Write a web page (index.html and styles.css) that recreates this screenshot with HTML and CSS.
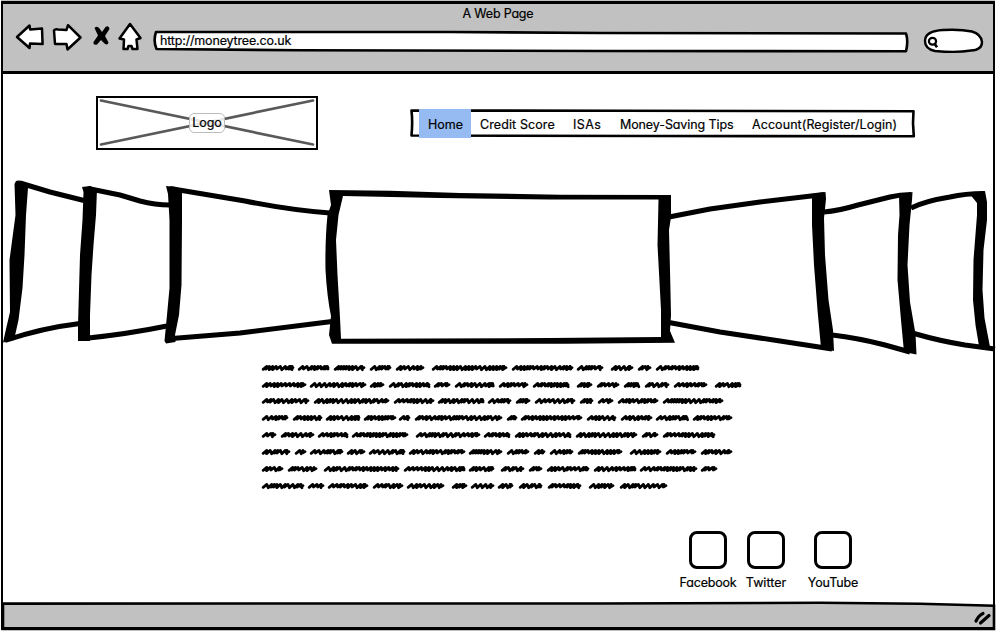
FILE: index.html
```html
<!DOCTYPE html>
<html lang="en">
<head>
<meta charset="utf-8">
<title>A Web Page</title>
<link rel="stylesheet" href="styles.css">
</head>
<body>
<div class="window">
  <header class="chrome">
    <div class="title">A Web Page</div>
    <div class="toolbar">
      <svg class="nav-icons" width="130" height="34" viewBox="13 20 130 34">
        <g fill="#fff" stroke="#000" stroke-width="2.500" stroke-linejoin="round">
          <path d="M17 37 L29.500 25.500 L30.200 29.500 L42 28.500 L42.600 44 L30 43.500 L29.500 48 Z"/>
          <path d="M54 30.500 Q55 29 58 29.500 L66.500 30 L68 25.200 L80.500 37.500 L67.500 49.500 L66.500 44 L55 44 Z"/>
          <path d="M130 24 L140.500 38 L136.500 39.500 L137.500 49 L132.500 49 L131.500 46 L128.500 46 L127.500 49 L123.500 49 L124 39.500 L119.500 38.500 Z"/>
        </g>
        <path d="M94.500 28 Q97 25.500 99.500 28.500 L102 32 L105.500 27 Q109 25 109.500 29 L105 36 L108.500 42.500 Q107.500 46 104.500 43.500 L101 40 L97 44.500 Q93 45.500 93.500 42 L98 35.500 Z"/>
      </svg>
      <div class="address">
        <svg class="outline" width="758" height="24" viewBox="152 29 758 24">
          <path d="M156 32 L450 32 L600 33 L906 33.500 Q908.500 41 906 51.300 L600 51 L300 50.300 L156.500 49 Q153 41 156 32 Z"/>
        </svg>
        <span class="url">http://moneytree.co.uk</span>
      </div>
      <svg class="search" width="64" height="28" viewBox="921 27 64 28">
        <path d="M925 41 Q925 31 943 30 Q960 29 972 31.500 Q981 34 982 42 Q982 50 971 50.500 Q957 53 935 51 Q925 49 925 41 Z" fill="#fff" stroke="#000" stroke-width="2.400"/>
        <ellipse cx="932.500" cy="41.300" rx="3.600" ry="3.400" fill="none" stroke="#000" stroke-width="2.200"/>
        <path d="M934.500 43.500 L937 47.200" stroke="#000" stroke-width="2.600"/>
      </svg>
    </div>
  </header>

  <main class="page">
    <div class="masthead">
      <div class="logo">
        <svg class="cross" width="218" height="49" viewBox="0 0 218 49">
          <path d="M3 2.500 L215 46.500 M3 46.500 L215 2.500" stroke="#595959" stroke-width="2.700" stroke-linecap="round"/>
        </svg>
        <span class="logo-label">Logo</span>
      </div>
      <nav class="menu">
        <svg class="menu-outline" width="506" height="30" viewBox="410 109 506 30">
          <path d="M411.500 110.500 L620 110.700 L913.500 111.200 L913 123 L913.800 136.300 L650 136 L411.500 135.500 Q412.800 122 411.500 110.500 Z"/>
        </svg>
        <a class="item home">Home</a>
        <a class="item credit">Credit Score</a>
        <a class="item isas">ISAs</a>
        <a class="item tips">Money-Saving Tips</a>
        <a class="item account">Account(Register/Login)</a>
      </nav>
    </div>

    <svg class="carousel" width="996" height="180" viewBox="0 176 996 180">
      <g class="edges">
        <path d="M20 183 L50 192 L84 200.500 M5 340.500 Q42 328 80 323.500"/>
        <path d="M88 188.500 L120 195 L140 201 Q155 205 170 205 M84 338.500 Q128 334 167 326"/>
        <path d="M170 188.500 L245 201 Q290 210 330 213 M172 338.500 L240 333 L332 321.500"/>
        <path d="M669 217 L710 209 L760 202 L824 194.500 M669 322.500 L720 332 L780 341 L832 349"/>
        <path d="M824 212 Q838 211 858 205 L890 197 Q900 194.500 911 194.500 M832 335 Q858 338 885 345 L910 352"/>
        <path d="M911 208 Q925 201 950 197 Q965 193.500 984 193.500 M914 333.500 Q940 341 965 345 L995 349"/>
      </g>
      <path d="M16 181 Q20 179 27 184 L28 188 L26 215 L24.500 255 L22.500 288 L18.500 320 L14 340 L3 342.500 L6 329 L10 312 L9.500 260 L15.500 215 L14.500 184 Z"/>
      <path d="M82 187 L90 186 L97 189 L96 215 L93.500 245 L91.500 275 L90 315 L90 341 L78 341 L78 325 L80 255 L82.500 220 L83.500 192 Z"/>
      <path d="M166 186 L176 187 L182 191 L182 222 L181.500 285 L179 315 L175 335 L175.500 342 L166 343.500 L164.500 341 L167 315 L169.500 288 L169.500 220 L168 194 Z"/>
      <path fill-rule="evenodd" d="M329 190 L390 190.800 L460 193 L560 194.700 L671 195 L671 217 L669 230 L670 270 L671 315 L670 331 L675 342.700 L565 343.700 L332 343.700 L329 335 L331 316 Q327 297 325.500 270 Q325 240 327.500 215 L331 205 Z M343 196 L440 198 L550 199.500 L658.500 199.500 L657.500 245 L661 310 L661 337 L550 338 L341 338.800 L340 318 L337.500 275 L336 240 L338.500 215 Z"/>
      <path d="M812 194 L825.500 192 L826 199 L824 218 L825 255 L828.500 300 L833 330 L834 351 L821 348 L817.500 310 L814 265 L812 225 Z"/>
      <path d="M899 195 L912.500 192 L912 200 L909.500 225 L907.500 265 L910 302 L915.500 334 L916.500 354.500 L904 352 L901 320 L897.500 280 L898 235 L899.500 215 Z"/>
      <path d="M969 193 L985 191 L987 202 L987 220 L983.500 250 L982.500 290 L984.500 318 L990 347 L979 346 L975.500 325 L973 300 L973.500 260 L977 215 L977 203 L973 198 Z"/>
    </svg>

    <svg class="copy" width="484" height="136" viewBox="260 360 484 136"><path id="scribble"/></svg>

    <div class="social">
      <div class="network"><span class="tile"></span><span class="name facebook">Facebook</span></div>
      <div class="network"><span class="tile"></span><span class="name twitter">Twitter</span></div>
      <div class="network"><span class="tile"></span><span class="name youtube">YouTube</span></div>
    </div>
  </main>

  <footer class="status">
    <svg width="996" height="30" viewBox="0 601 996 30">
      <path d="M3 603.600 L600 603.500 L820 602.800 L920 603.800 L994 605.700 L994 629 L3 629 Z" fill="#c1c1c1" stroke="#000" stroke-width="2.600"/>
      <path d="M976 621 Q979 615 983 613.500 M980.500 623 L989 615.500" fill="none" stroke="#000" stroke-width="3.200" stroke-linecap="round"/>
    </svg>
  </footer>
</div>
<script src="script.js"></script>
</body>
</html>
```
FILE: styles.css
```css
* { box-sizing: border-box; }

body {
  margin: 0;
  background: #fff;
  color: #000;
  font: 12.5px/16px Inter, "Liberation Sans", sans-serif;
  font-feature-settings: "cv11", "ss03";
  -webkit-text-stroke: 0.2px #000;
}

svg { display: block; }

.window {
  position: relative;
  width: 996px;
  height: 631px;
  overflow: hidden;
  display: flex;
  flex-direction: column;
}

.window::after {
  content: "";
  position: absolute;
  inset: 1px;
  border: 3px solid #000;
  border-left-width: 2px;
  border-right-width: 2px;
  pointer-events: none;
}

.chrome {
  height: 74px;
  margin: 0 1px;
  padding-top: 6px;
  background: #c1c1c1;
  border-bottom: 3px solid #000;
}

.title { text-align: center; letter-spacing: -0.2px; }

.toolbar { display: flex; align-items: flex-start; padding: 0 10px 0 12px; }
.nav-icons { margin: -2px 9px 0 0; }
.address { position: relative; width: 758px; height: 24px; margin-top: 7px; padding: 4px 8px; }
.outline, .menu-outline, .cross { position: absolute; left: 0; top: 0; }
.outline path, .menu-outline path { fill: #fff; stroke: #000; stroke-width: 2.6; stroke-linejoin: round; }
.url { position: relative; letter-spacing: -0.17px; }
.search { margin: 5px 0 0 11px; }

.page { flex: 1; display: flex; flex-direction: column; }

.masthead { display: flex; align-items: flex-start; padding: 22px 0 0 96px; height: 102px; }

.logo {
  position: relative;
  width: 222px;
  height: 54px;
  border: 2.5px solid #000;
  display: flex;
  align-items: center;
  justify-content: center;
}
.logo-label {
  position: relative;
  width: 36px;
  height: 20px;
  margin-top: -1px;
  border: 1px solid #bcbcbc;
  border-radius: 5px;
  background: rgba(255, 255, 255, .85);
  line-height: 17px;
  text-align: center;
}

.menu { position: relative; display: flex; width: 506px; height: 30px; margin: 13px 0 0 92px; padding-left: 9px; }
.item { position: relative; height: 29px; line-height: 31px; white-space: nowrap; }
.home { width: 52px; padding-left: 9px; background: #95bbf2; }
.credit { width: 102px; padding-left: 9px; letter-spacing: 0.1px; }
.isas { width: 47px; letter-spacing: 0.4px; }
.tips { width: 132px; letter-spacing: -0.1px; }
.account { letter-spacing: 0.07px; }

.carousel { flex: none; }
.edges { fill: none; stroke: #000; stroke-width: 5; stroke-linejoin: round; }

.copy { margin: 4px 0 0 260px; flex: none; }
.copy path { fill: none; stroke: #000; stroke-width: 2.8; stroke-linecap: round; stroke-linejoin: round; }

.social { display: flex; margin: 35px 0 0 679px; }
.network { display: flex; flex-direction: column; align-items: center; width: 58px; }
.network:last-child { margin-left: 9px; }
.tile { width: 38px; height: 38px; border: 3px solid #000; border-radius: 8px; }
.name { margin-top: 6px; white-space: nowrap; }
.facebook { letter-spacing: -0.2px; }
.youtube { letter-spacing: -0.1px; }

.status { height: 30px; }
```
FILE: script.js
```js
// Start and end of every scribbled word, line by line.
const lines = [
  [368, "262-294 298-329 334-365 370-391 396-424 432-507 512-573 577-603 611-633 638-651 656-699"],
  [385, "262-306 310-366 370-384 389-430 434-450 455-494 499-528 533-569 577-592 597-619 624-639 645-669 674-707 715-741"],
  [401, "262-309 314-389 394-434 438-484 488-511 516-530 535-575 580-593 598-613 618-658 663-723"],
  [418, "262-288 293-322 326-360 364-396 399-410 415-502 507-517 521-582 587-616 621-652 656-688 693-732"],
  [435, "262-276 281-314 318-348 352-408 416-480 484-510 515-571 576-637 642-658 663-715"],
  [452, "262-290 295-306 310-343 347-365 369-405 409-465 469-502 507-529 534-545 550-573 578-622 630-661 666-696 701-732"],
  [469, "262-283 288-317 324-399 404-465 469-494 501-524 529-542 547-589 594-636 640-697 701-717"],
  [486, "262-304 308-324 328-368 373-403 407-444 452-467 471-494 498-513 519-542 548-581 589-614 620-667"]
];
let d = "";
let seed = 7;
for (const [y, words] of lines) {
  for (const word of words.split(" ")) {
    const [start, end] = word.split("-").map(Number);
    let x = start + 1.2;
    d += `M${x} ${y + 1.3}`;
    while (x < end - 5) {
      seed = (seed * 73 + 41) % 997;
      const step = 2.6 + (seed % 4) * 0.8;
      const low = y + 1 + (seed % 2) * 0.7;
      d += `L${x + 3.6} ${y - 1.6}L${x + step} ${low}`;
      x += step;
    }
    d += `L${end - 3} ${y - 1.6}L${end - 3.2} ${y + 0.9}L${end - 1} ${y - 0.4}`;
  }
}
document.getElementById("scribble").setAttribute("d", d);
```
